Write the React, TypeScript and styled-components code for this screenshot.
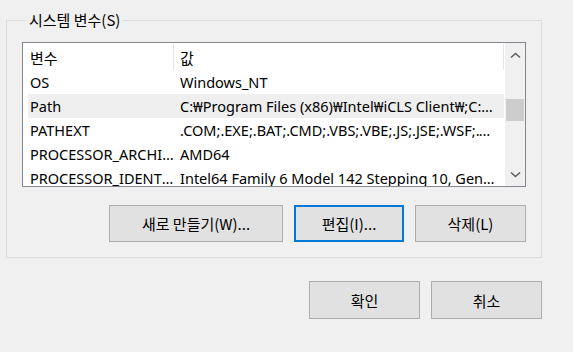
import React from "react";
import styled, { createGlobalStyle } from "styled-components";

const Global = createGlobalStyle`
  html, body { margin: 0; padding: 0; background: #f0f0f0; }
  body {
    font-family: "Noto Sans", "Noto Sans CJK KR", sans-serif;
    font-size: 14px;
    color: #000;
  }
  * { box-sizing: border-box; }
`;

const Page = styled.div`
  width: 573px;
  height: 352px;
  padding: 10px 0 0 6px;
  overflow: hidden;
`;

const Group = styled.fieldset`
  width: 536px;
  margin: 0;
  padding: 12px 15px 15px 15px;
  border: 1px solid #dcdcdc;
  min-inline-size: 0;
`;

const Legend = styled.legend`
  margin-left: 4px;
  padding: 0 3px;
  font-family: "Noto Sans CJK KR", sans-serif;
  font-size: 15px;
  line-height: 20px;
  height: 20px;
`;

const ListBox = styled.div`
  width: 504px;
  height: 145px;
  border: 1px solid #828790;
  background: #fff;
  display: flex;
`;

const ListContent = styled.div`
  flex: 1;
  overflow: hidden;
  display: flex;
  flex-direction: column;
`;

const Header = styled.div`
  height: 27px;
  display: flex;
  flex-shrink: 0;
  padding-top: 1px;
`;

const HeaderCell = styled.div<{ $w?: number; $pad: number }>`
  ${(p) => (p.$w ? `width: ${p.$w}px;` : "flex: 1;")}
  padding-left: ${(p) => p.$pad}px;
  border-right: 1px solid #e5e5e5;
  display: flex;
  align-items: center;
  font-size: 15px;
  font-family: "Noto Sans CJK KR", sans-serif;
`;

const Row = styled.div<{ $sel?: boolean }>`
  height: 24px;
  flex-shrink: 0;
  margin-left: 5px;
  padding-left: 2px;
  display: flex;
  align-items: center;
  background: ${(p) => (p.$sel ? "#efefef" : "transparent")};
`;

const Cell = styled.div<{ $w?: number }>`
  ${(p) => (p.$w ? `width: ${p.$w}px; margin-right: 5px;` : "flex: 1; margin-right: 6px;")}
  white-space: nowrap;
  overflow: hidden;
  text-overflow: ellipsis;
  font-size: 14.5px;
  line-height: 24px;
`;

const ScrollBar = styled.div`
  width: 21px;
  background: #f0f0f0;
  display: flex;
  flex-direction: column;
  align-items: center;
  border-left: 1px solid #fff;
`;

const ArrowBtn = styled.div`
  height: 24px;
  width: 100%;
  display: flex;
  align-items: center;
  justify-content: center;
`;

const Track = styled.div`
  flex: 1;
  width: 100%;
  position: relative;
`;

const Thumb = styled.div`
  position: absolute;
  left: 1px;
  right: 1px;
  top: 32px;
  height: 22px;
  background: #cdcdcd;
`;

const ButtonRow = styled.div<{ $mt: number }>`
  display: flex;
  justify-content: flex-end;
  gap: 11px;
  margin-top: ${(p) => p.$mt}px;
`;

const Button = styled.button<{ $w: number; $h: number; $default?: boolean }>`
  width: ${(p) => p.$w}px;
  height: ${(p) => p.$h}px;
  background: #e1e1e1;
  border: ${(p) => (p.$default ? "2px solid #0078d7" : "1px solid #adadad")};
  font-family: "Noto Sans CJK KR", sans-serif;
  font-size: 15px;
  color: #000;
  padding: 0;
  display: flex;
  align-items: center;
  justify-content: center;
`;

const BottomRow = styled(ButtonRow)`
  width: 536px;
`;

const Chevron = ({ down }: { down?: boolean }) => (
  <svg width="11" height="7" viewBox="0 0 11 7">
    <path
      d={down ? "M1 1.5 L5.5 5.5 L10 1.5" : "M1 5.5 L5.5 1.5 L10 5.5"}
      fill="none"
      stroke="#606060"
      strokeWidth="1.6"
    />
  </svg>
);

const rows: [string, string][] = [
  ["OS", "Windows_NT"],
  ["Path", "C:\u20A9Program Files (x86)\u20A9Intel\u20A9iCLS Client\u20A9;C:\u20A9Program Files\u20A9Intel\u20A9iCLS Client"],
  ["PATHEXT", ".COM;.EXE;.BAT;.CMD;.VBS;.VBE;.JS;.JSE;.WSF;.WSH;.MSC"],
  ["PROCESSOR_ARCHITECTURE", "AMD64"],
  ["PROCESSOR_IDENTIFIER", "Intel64 Family 6 Model 142 Stepping 10, GenuineIntel"],
];

export default function App() {
  return (
    <Page>
      <Global />
      <Group>
        <Legend>시스템 변수(S)</Legend>
        <ListBox>
          <ListContent>
            <Header>
              <HeaderCell $w={151} $pad={7}>변수</HeaderCell>
              <HeaderCell $pad={6}>값</HeaderCell>
            </Header>
            {rows.map(([k, v], i) => (
              <Row key={k} $sel={i === 1}>
                <Cell $w={145}>{k}</Cell>
                <Cell>{v}</Cell>
              </Row>
            ))}
          </ListContent>
          <ScrollBar>
            <ArrowBtn><Chevron /></ArrowBtn>
            <Track><Thumb /></Track>
            <ArrowBtn><Chevron down /></ArrowBtn>
          </ScrollBar>
        </ListBox>
        <ButtonRow $mt={18}>
          <Button $w={174} $h={37}>새로 만들기(W)...</Button>
          <Button $w={110} $h={37} $default>편집(I)...</Button>
          <Button $w={111} $h={37}>삭제(L)</Button>
        </ButtonRow>
      </Group>
      <BottomRow $mt={23}>
        <Button $w={111} $h={38}>확인</Button>
        <Button $w={111} $h={38}>취소</Button>
      </BottomRow>
    </Page>
  );
}
